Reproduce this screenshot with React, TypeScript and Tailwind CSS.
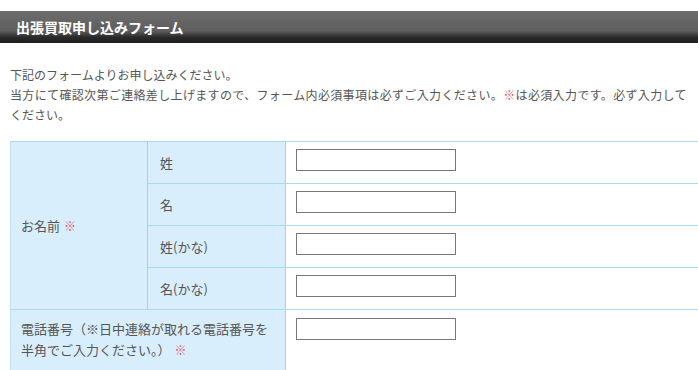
import React from "react";

const Req = () => <span className="text-[#e6506b] text-[12px] ml-1">※</span>;

const Field = () => (
  <input
    type="text"
    className="block w-[160px] h-[22px] border border-[#777] bg-white outline-none"
  />
);

const subRows = ["姓", "名", "姓(かな)", "名(かな)"];

export default function App() {
  return (
    <div className="w-[698px] h-[370px] overflow-hidden bg-white text-[#555] font-['Noto_Sans_CJK_JP','Noto_Sans',sans-serif]">
      {/* Title bar */}
      <h2 className="mt-[11px] h-8 flex items-center pl-4 text-white font-bold text-[14px] bg-[linear-gradient(to_bottom,#6d6d6d_0%,#5e5e5e_62%,#2a2a2a_82%,#1f1f1f_100%)]">
        出張買取申し込みフォーム
      </h2>

      {/* Intro */}
      <div className="mt-[22px] pl-[10px] text-[12px] leading-5 whitespace-nowrap">
        <p>下記のフォームよりお申し込みください。</p>
        <p className="tracking-[0.35px]">
          当方にて確認次第ご連絡差し上げますので、フォーム内必須事項は必ずご入力ください。
          <span className="text-[#e6506b]">※</span>は必須入力です。必ず入力して
        </p>
        <p>ください。</p>
      </div>

      {/* Form table */}
      <table className="mt-4 ml-[10px] w-[688px] border-collapse text-[13px] border-l border-l-[#c4e2f2]">
        <tbody>
          {subRows.map((label, i) => (
            <tr key={label}>
              {i === 0 && (
                <td
                  rowSpan={4}
                  className="w-[137px] pl-[10px] bg-[#d9eefc] border-t border-t-[#a9dbeb] border-r border-r-[#b6cbd9] border-b border-b-[#a9dbeb] align-middle"
                >
                  お名前<Req />
                </td>
              )}
              <td
                className={`w-[138px] h-[42px] pl-3 bg-[#d9eefc] border-b border-b-[#a9dbeb] border-r border-r-[#b6cbd9] align-middle ${
                  i === 0 ? "border-t border-t-[#a9dbeb]" : ""
                }`}
              >
                {label}
              </td>
              <td
                className={`h-[42px] pl-[10px] pt-[7px] border-b border-b-[#a9dbeb] align-top ${
                  i === 0 ? "border-t border-t-[#a9dbeb]" : ""
                }`}
              >
                <Field />
              </td>
            </tr>
          ))}
          <tr>
            <td
              colSpan={2}
              className="pl-[10px] pr-2 pt-[8px] pb-[12px] leading-[21px] bg-[#d9eefc] border-r border-r-[#b6cbd9] border-b border-b-[#a9dbeb] align-top whitespace-nowrap"
            >
              電話番号（※日中連絡が取れる電話番号を
              <br />
              半角でご入力ください。）<Req />
            </td>
            <td className="pl-[10px] pt-[8px] border-b border-b-[#a9dbeb] align-top">
              <Field />
            </td>
          </tr>
        </tbody>
      </table>
    </div>
  );
}
